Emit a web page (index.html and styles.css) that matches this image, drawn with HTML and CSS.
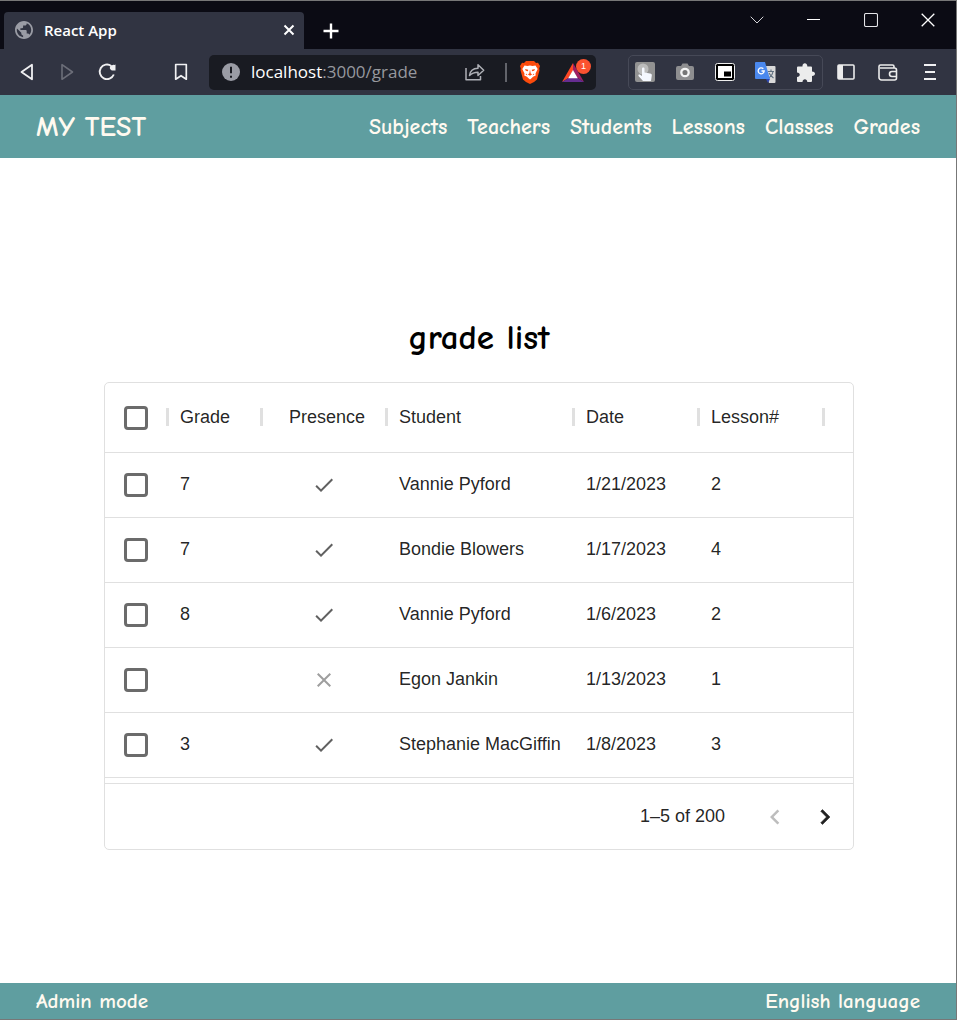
FILE: index.html
```html
<!DOCTYPE html>
<html lang="en">
<head>
<meta charset="utf-8">
<title>React App</title>
<link rel="stylesheet" href="styles.css">
</head>
<body>
<div class="window">
  <div class="tabstrip">
    <div class="tab">
      <svg class="tab-icon" width="18" height="18" viewBox="2 2 20 20"><path fill="#9a9ca5" d="M12 2C6.480 2 2 6.480 2 12s4.480 10 10 10 10-4.480 10-10S17.520 2 12 2zm-1 17.930c-3.950-.49-7-3.850-7-7.930 0-.62.080-1.210.210-1.790L9 15v1c0 1.100.9 2 2 2v1.930zm6.900-2.540c-.26-.81-1-1.390-1.900-1.390h-1v-3c0-.55-.45-1-1-1H8v-2h2c.55 0 1-.45 1-1V7h2c1.100 0 2-.9 2-2v-.41c2.930 1.190 5 4.060 5 7.410 0 2.080-.8 3.970-2.100 5.390z"/></svg>
      <span class="tab-title">React App</span>
      <button class="plain tab-close" aria-label="Close tab"><svg width="12" height="12" viewBox="0 0 12 12"><path d="M1.500 1.500l9 9M10.500 1.500l-9 9" stroke="#fff" stroke-width="2"/></svg></button>
    </div>
    <button class="plain new-tab" aria-label="New tab"><svg width="16" height="16" viewBox="0 0 16 16"><path d="M8 .5v15M.5 8h15" stroke="#fff" stroke-width="2.400"/></svg></button>
    <div class="window-controls">
      <button class="plain" aria-label="Search tabs"><svg width="14" height="8" viewBox="0 0 14 8"><path d="M.7.700L7 7 13.300.700" fill="none" stroke="#d4d4d8"/></svg></button>
      <button class="plain" aria-label="Minimize"><svg width="13" height="13" viewBox="0 0 13 13"><path d="M0 6.500h13" stroke="#fff"/></svg></button>
      <button class="plain" aria-label="Maximize"><svg width="14" height="14" viewBox="0 0 14 14"><rect x=".5" y=".5" width="13" height="13" rx="1.500" fill="none" stroke="#e4e4e8" stroke-width="1.100"/></svg></button>
      <button class="plain" aria-label="Close window"><svg width="14" height="14" viewBox="0 0 14 14"><path d="M.7.700l12.600 12.600M13.300.700L.7 13.300" stroke="#fff" stroke-width="1.300"/></svg></button>
    </div>
  </div>

  <div class="toolbar">
    <button class="plain tool" aria-label="Back"><svg width="14" height="18" viewBox="0 0 14 18"><path d="M12 1.700v14.600L1.500 9z" fill="none" stroke="#f0f0f2" stroke-width="1.800" stroke-linejoin="round"/></svg></button>
    <button class="plain tool" aria-label="Forward"><svg width="14" height="18" viewBox="0 0 14 18"><path d="M2 1.700v14.600L12.500 9z" fill="none" stroke="#6c6e79" stroke-width="1.600" stroke-linejoin="round"/></svg></button>
    <button class="plain tool" aria-label="Reload"><svg width="18" height="18" viewBox="0 0 18 18"><path d="M13.300 2.900A7.300 7.300 0 1 0 15.800 11.500" fill="none" stroke="#f0f0f2" stroke-width="1.900"/><path d="M17.500 1.500v6h-3.700c-2-1.200-2.600-3.100-1.300-4.600 1.500-1.300 3.500-.3 5-1.400z" fill="#f0f0f2"/></svg></button>
    <button class="plain tool bookmark" aria-label="Bookmark"><svg width="14" height="18" viewBox="0 0 14 18"><path d="M1.700 1.500h10.600v14.700L7 12.700l-5.300 3.500z" fill="none" stroke="#f0f0f2" stroke-width="1.700" stroke-linejoin="round"/></svg></button>
    <div class="address">
      <svg width="18" height="18" viewBox="0 0 18 18"><circle cx="9" cy="9" r="9" fill="#9a9ca5"/><path d="M9 3.700v6.600M9 12.700v2" stroke="#191b22" stroke-width="2"/></svg>
      <span class="url"><span class="host">localhost</span>:3000/grade</span>
      <button class="plain share" aria-label="Share"><svg width="20" height="18" viewBox="0 0 20 18"><path d="M1 5v11.800h14.500V13M4.500 12.500C5 8 8 5.500 13 5.300V1.700l5.700 5.600-5.700 5.200V9.200c-4 0-6.300 1-8.500 3.300z" fill="none" stroke="#aeb0b6" stroke-width="1.500" stroke-linejoin="round"/></svg></button>
      <span class="divider"></span>
      <button class="plain shield" aria-label="Shields"><svg width="20" height="23" viewBox="0 0 20 23"><path d="M6 0h8l2 2 2-.2L20 5l-.8 2.500.3 1.700-2.500 9.300L14 21l-4 2-4-2-3-2.500L.5 9.200l.3-1.700L0 5l2-3.200L4 2z" fill="#fb4b0c"/><path d="M4.500 4.500l3 .6L10 4.500l2.500.6 3-.6 2.200 3.500-2.200 4.500.2 2-2.700 1.300-1.200 1.200L10 18.500 8.200 17 7 15.800l-2.700-1.300.2-2L2.300 8z" fill="#fff"/><path d="M5 8l3.200.8-.2 1.500-2.200-.6zM15 8l-3.200.8.2 1.500 2.200-.6zM10 8.500l.7 4 1.500.8L10 14.700l-2.200-1.400 1.500-.8zM6 12.500l1.600 1.800-1.800-.5zM14 12.500l-1.600 1.800 1.800-.5z" fill="#fb4b0c"/></svg></button>
      <button class="plain rewards" aria-label="Rewards"><svg width="22" height="19" viewBox="0 0 22 19"><path d="M11 0v7.500L6.500 15 0 19z" fill="#ff4724"/><path d="M11 0l11 19-6.500-4L11 7.500z" fill="#9e1f63"/><path d="M0 19l6.500-4h9l6.500 4z" fill="#662d91"/><path d="M11 7l4.800 8.300H6.200z" fill="#fff"/></svg><span class="badge">1</span></button>
    </div>
    <div class="extensions">
      <button class="plain" aria-label="Click assistant"><svg width="20" height="20" viewBox="0 0 20 20"><rect width="20" height="20" rx="2" fill="#929292"/><circle cx="8" cy="7" r="5.500" fill="#bcbcbc"/><path d="M7 6.500c0-1.500 2.500-1.500 2.500 0v4l5.500 1c1.500.3 2 1 1.800 2L16 19H8l-4.500-5c-.5-1.500 1-1.800 2-1l1.500 1z" fill="#f5f8ff"/></svg></button>
      <button class="plain" aria-label="Screenshot"><svg width="20" height="18" viewBox="0 0 20 18"><path d="M3 3h3l1.500-2.500h5L14 3h3a2 2 0 0 1 2 2v10a2 2 0 0 1-2 2H3a2 2 0 0 1-2-2V5a2 2 0 0 1 2-2z" fill="#8e8e90"/><circle cx="10" cy="9.500" r="3.700" fill="#777" stroke="#f4f4f4" stroke-width="2.300"/></svg></button>
      <button class="plain" aria-label="Picture in picture"><svg width="20" height="18" viewBox="0 0 20 18"><rect x=".5" y=".5" width="19" height="17" rx="2" fill="#000" stroke="#eee"/><rect x="3" y="3" width="14" height="12" fill="#fff"/><rect x="9" y="8.500" width="7" height="5" fill="#000"/></svg></button>
      <button class="plain" aria-label="Translate"><svg width="21" height="21" viewBox="0 0 21 21"><path d="M9 4h10.500a1 1 0 0 1 1 1v15a1 1 0 0 1-1 1H14z" fill="#d9d9d9"/><path d="M13 9.500h6M16 7.500v2M18 9.500c-.5 3-2 5-4.500 6.500M14 11c1 2 2.500 3.500 4.500 5" fill="none" stroke="#607080" stroke-width="1.100"/><path d="M1 0h9l5 17H1a1 1 0 0 1-1-1V1a1 1 0 0 1 1-1z" fill="#4a88ee"/><path d="M11 17h4l-2 4z" fill="#2c46b5"/><path d="M8.300 6.700A3 3 0 1 0 9.200 9H6.500" fill="none" stroke="#fff" stroke-width="1.300"/></svg></button>
      <button class="plain" aria-label="Extensions"><svg width="19" height="19" viewBox="0 0 19 19"><path d="M5 3.500h1.500c-.5-4.500 5.200-4.500 4.800 0H15a1 1 0 0 1 1 1v4c4 0 4 4.600 0 4.600V18a1 1 0 0 1-1 1h-3.700c0-3.800-4.800-3.800-4.800 0H2a1 1 0 0 1-1-1v-4c3.700 0 3.700-4.500 0-4.500v-5a1 1 0 0 1 1-1z" fill="#ececec"/></svg></button>
    </div>
    <button class="plain side" aria-label="Sidebar"><svg width="18" height="16" viewBox="0 0 18 16"><rect x="1" y="1" width="16" height="14" rx="1" fill="none" stroke="#ececec" stroke-width="1.600"/><path d="M1 1h5v14H1z" fill="#ececec"/></svg></button>
    <button class="plain side" aria-label="Wallet"><svg width="20" height="17" viewBox="0 0 20 17"><path d="M16 4V2.500a1.500 1.500 0 0 0-1.500-1.500H2.500A1.500 1.500 0 0 0 1 2.500v11A2.500 2.500 0 0 0 3.500 16h13a2 2 0 0 0 2-2V6a2 2 0 0 0-2-2H2M19 7.500h-5a2.500 2.500 0 0 0 0 5h5" fill="none" stroke="#ececec" stroke-width="1.600"/></svg></button>
    <button class="plain side" aria-label="Menu"><svg width="12" height="16" viewBox="0 0 12 16"><path d="M0 1h12M1 8h10M0 15h12" stroke="#f0f0f2" stroke-width="1.800"/></svg></button>
  </div>

  <header class="site-header">
    <a class="brand" href="#">MY TEST</a>
    <nav class="nav">
      <a href="#">Subjects</a><a href="#">Teachers</a><a href="#">Students</a><a href="#">Lessons</a><a href="#">Classes</a><a href="#">Grades</a>
    </nav>
  </header>

  <main class="content">
    <h1 class="title">grade list</h1>
    <section class="grid" aria-label="grade list">
      <table class="grades">
        <colgroup><col class="c-check"><col class="c-grade"><col class="c-mid"><col class="c-student"><col class="c-mid"><col class="c-mid"><col></colgroup>
        <thead>
          <tr><th><input class="check" type="checkbox" aria-label="Select all rows"></th><th>Grade</th><th class="presence-head">Presence</th><th>Student</th><th>Date</th><th>Lesson#</th><td></td></tr>
        </thead>
        <tbody>
          <tr><td><input class="check" type="checkbox" aria-label="Select row 1"></td><td>7</td><td class="presence"><svg class="mark" viewBox="0 0 24 24" role="img" aria-label="yes"><path d="M9 16.170L4.830 12l-1.420 1.410L9 19 21 7l-1.410-1.410z"/></svg></td><td>Vannie Pyford</td><td>1/21/2023</td><td>2</td><td></td></tr>
          <tr><td><input class="check" type="checkbox" aria-label="Select row 2"></td><td>7</td><td class="presence"><svg class="mark" viewBox="0 0 24 24" role="img" aria-label="yes"><path d="M9 16.170L4.830 12l-1.420 1.410L9 19 21 7l-1.410-1.410z"/></svg></td><td>Bondie Blowers</td><td>1/17/2023</td><td>4</td><td></td></tr>
          <tr><td><input class="check" type="checkbox" aria-label="Select row 3"></td><td>8</td><td class="presence"><svg class="mark" viewBox="0 0 24 24" role="img" aria-label="yes"><path d="M9 16.170L4.830 12l-1.420 1.410L9 19 21 7l-1.410-1.410z"/></svg></td><td>Vannie Pyford</td><td>1/6/2023</td><td>2</td><td></td></tr>
          <tr><td><input class="check" type="checkbox" aria-label="Select row 4"></td><td></td><td class="presence"><svg class="mark no" viewBox="0 0 24 24" role="img" aria-label="no"><path d="M19 6.410L17.590 5 12 10.590 6.410 5 5 6.410 10.590 12 5 17.590 6.410 19 12 13.410 17.590 19 19 17.590 13.410 12z"/></svg></td><td>Egon Jankin</td><td>1/13/2023</td><td>1</td><td></td></tr>
          <tr><td><input class="check" type="checkbox" aria-label="Select row 5"></td><td>3</td><td class="presence"><svg class="mark" viewBox="0 0 24 24" role="img" aria-label="yes"><path d="M9 16.170L4.830 12l-1.420 1.410L9 19 21 7l-1.410-1.410z"/></svg></td><td>Stephanie MacGiffin</td><td>1/8/2023</td><td>3</td><td></td></tr>
        </tbody>
      </table>
      <div class="pager">
        <span class="range">1–5 of 200</span>
        <button class="plain page" aria-label="Previous page" disabled><svg width="30" height="30" viewBox="0 0 24 24"><path d="M15.410 7.410L14 6l-6 6 6 6 1.410-1.410L10.830 12z" fill="#bdbdbd"/></svg></button>
        <button class="plain page" aria-label="Next page"><svg width="30" height="30" viewBox="0 0 24 24"><path d="M10 6L8.590 7.410 13.170 12l-4.580 4.590L10 18l6-6z" fill="#212121" stroke="#212121" stroke-width=".4"/></svg></button>
      </div>
    </section>
  </main>

  <footer class="site-footer">
    <a href="#">Admin mode</a>
    <a href="#">English language</a>
  </footer>
</div>
</body>
</html>
```

FILE: styles.css
```css
* {
  box-sizing: border-box;
}

body {
  margin: 0;
  background: #fff;
  font-family: "Liberation Sans", Arial, sans-serif;
}

.window {
  display: flex;
  flex-direction: column;
  min-height: 100vh;
  border: 1px solid #777;
  border-left: 0;
}

.plain {
  display: flex;
  align-items: center;
  justify-content: center;
  padding: 0;
  border: 0;
  background: none;
}

/* Browser frame */
.tabstrip {
  display: flex;
  align-items: flex-end;
  height: 48px;
  padding-left: 4px;
  background: #0b0b14;
  font-family: "Segoe UI", "Open Sans", sans-serif;
}

.tab {
  display: flex;
  align-items: center;
  width: 300px;
  height: 37px;
  padding: 0 9px 2px 11px;
  border-radius: 4px 4px 0 0;
  background: #313442;
  color: #fff;
  font-size: 15px;
  font-weight: 600;
}

.tab-title {
  flex: 1;
  margin-left: 11px;
}

.tab-close {
  width: 13px;
}

.new-tab {
  width: 54px;
  height: 37px;
}

.window-controls {
  display: flex;
  align-self: flex-start;
  margin-left: auto;
}

.window-controls .plain {
  width: 57px;
  height: 37px;
}

.toolbar {
  display: flex;
  align-items: center;
  height: 46px;
  padding: 0 5px 0 7px;
  background: #313442;
}

.tool {
  width: 40px;
  height: 34px;
}

.bookmark {
  margin: 0 8px 0 34px;
}

.address {
  display: flex;
  flex: 1;
  align-items: center;
  height: 35px;
  padding: 0 9px 0 13px;
  border-radius: 5px;
  background: #191b22;
  font-family: "Segoe UI", "Open Sans", sans-serif;
}

.url {
  flex: 1;
  margin-left: 11px;
  color: #96989e;
  font-size: 17px;
  line-height: 20px;
  white-space: nowrap;
}

.host {
  color: #fff;
}

.divider {
  width: 2px;
  height: 19px;
  margin: 0 13px 0 20px;
  background: #62646b;
}

.rewards {
  position: relative;
  margin: 0 3px 0 22px;
}

.badge {
  position: absolute;
  top: -4px;
  right: -7px;
  width: 15px;
  height: 15px;
  border-radius: 50%;
  background: #fb5230;
  color: #fff;
  font-size: 9px;
  line-height: 15px;
  text-align: center;
}

.extensions {
  display: flex;
  align-items: center;
  gap: 20px;
  width: 195px;
  height: 35px;
  margin: 0 2px 0 32px;
  padding-left: 6px;
  border: 1px solid #464957;
  border-radius: 5px;
}

.side {
  width: 42px;
  height: 34px;
}

/* Site */
.site-header,
.site-footer {
  display: flex;
  align-items: center;
  justify-content: space-between;
  padding: 0 36px;
  background: #5f9ea0;
  font-family: "Comic Sans MS", "Comic Neue", "Noto Sans", sans-serif;
  font-weight: 700;
}

.site-header {
  height: 63px;
  font-size: 22px;
}

.site-footer {
  height: 36px;
  font-size: 21px;
}

.site-header a,
.site-footer a {
  color: #fffaf0;
  text-decoration: none;
}

.site-header .brand {
  font-size: 28px;
}

.nav {
  display: flex;
  gap: 20px;
}

.content {
  display: flex;
  flex: 1;
  flex-direction: column;
  justify-content: center;
  padding: 0 102px 0 104px;
}

.title {
  margin: 25px 0 22px;
  font-family: "Comic Sans MS", "Comic Neue", "Noto Sans", sans-serif;
  font-size: 35px;
  font-weight: 700;
  line-height: 44px;
  text-align: center;
}

.grid {
  border: 1px solid #e0e0e0;
  border-radius: 5px;
  color: rgba(0, 0, 0, 0.87);
  font-size: 18px;
}

.grades {
  width: 100%;
  margin-bottom: 5px;
  border-collapse: separate;
  border-spacing: 0;
  table-layout: fixed;
}

.c-check {
  width: 62px;
}

.c-grade {
  width: 94px;
}

.c-mid {
  width: 125px;
}

.c-student {
  width: 187px;
}

.grades th,
.grades td {
  height: 65px;
  padding: 0 0 2px 13px;
  border-bottom: 1px solid #e0e0e0;
  font-weight: 400;
  text-align: left;
  white-space: nowrap;
}

.grades thead th,
.grades thead td {
  position: relative;
  height: 70px;
  padding-bottom: 0;
}

.grades thead th::after {
  position: absolute;
  top: 25px;
  right: -2px;
  width: 3px;
  height: 18px;
  background: #e0e0e0;
  content: "";
}

.grades .presence-head {
  padding-left: 28px;
}

.grades .presence {
  padding: 0;
  text-align: center;
}

.grades th:first-child,
.grades tbody td:first-child {
  padding: 0 0 0 19px;
}

.check {
  display: block;
  width: 24px;
  height: 24px;
  margin: 0;
  border: 3px solid #6b6b6b;
  border-radius: 4px;
  appearance: none;
}

.check:checked {
  background: #666;
}

.mark {
  display: block;
  width: 24px;
  height: 24px;
  margin: 0 auto;
  fill: #616161;
}

.no {
  fill: #9e9e9e;
}

.pager {
  display: flex;
  align-items: center;
  justify-content: flex-end;
  height: 66px;
  padding-right: 3px;
  border-top: 1px solid #e0e0e0;
}

.range {
  margin-right: 25px;
}

.page {
  width: 50px;
  height: 50px;
}
```
